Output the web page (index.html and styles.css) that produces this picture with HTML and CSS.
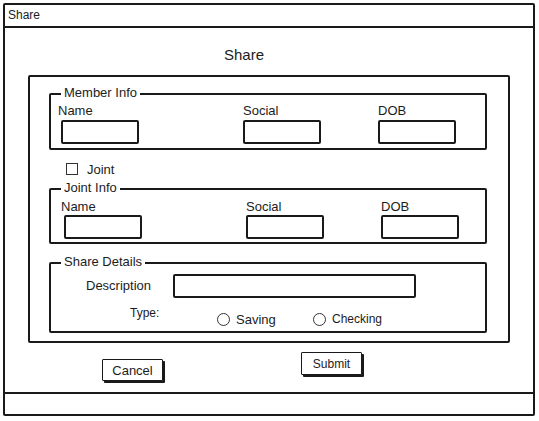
FILE: index.html
```html
<!DOCTYPE html>
<html lang="en">

<head>
    <meta charset="UTF-8">
    <meta name="viewport" content="width=device-width, initial-scale=1.0">
    <title>Share</title>
    <link rel="stylesheet" href="styles.css">
</head>

<body>
    <div class="window">
        <div class="titlebar">Share</div>

        <div class="content">
            <h2 class="heading">Share</h2>

            <div class="panel">

                <!--Member Info-->
                <div class="group member">
                    <span class="legend">Member Info</span>
                    <div class="cols">
                        <div class="field">
                            <p class="label">Name</p>
                            <div class="input shift"></div>
                        </div>
                        <div class="field">
                            <p class="label">Social</p>
                            <div class="input"></div>
                        </div>
                        <div class="field">
                            <p class="label">DOB</p>
                            <div class="input"></div>
                        </div>
                    </div>
                </div>

                <div class="joint-row">
                    <span class="checkbox"></span>
                    <span class="joint-text">Joint</span>
                </div>

                <!--Joint Info-->
                <div class="group joint">
                    <span class="legend">Joint Info</span>
                    <div class="cols">
                        <div class="field">
                            <p class="label">Name</p>
                            <div class="input shift"></div>
                        </div>
                        <div class="field">
                            <p class="label">Social</p>
                            <div class="input"></div>
                        </div>
                        <div class="field">
                            <p class="label">DOB</p>
                            <div class="input"></div>
                        </div>
                    </div>
                </div>

                <!--Share Details-->
                <div class="group details">
                    <span class="legend">Share Details</span>
                    <div class="row">
                        <span class="row-label desc">Description</span>
                        <div class="input wide"></div>
                    </div>
                    <div class="row">
                        <span class="row-label type">Type:</span>
                        <span class="option"><span class="radio"></span>Saving</span>
                        <span class="option arial"><span class="radio"></span>Checking</span>
                    </div>
                </div>
            </div>

            <div class="buttons">
                <button class="btn cancel">Cancel</button>
                <button class="btn submit">Submit</button>
            </div>
        </div>

        <div class="footer"></div>
    </div>
</body>

</html>
```

FILE: styles.css
```css
* {
    box-sizing: border-box;
}

body {
    margin: 0;
    font-family: "Liberation Sans", Arial, sans-serif;
    font-size: 13px;
    color: #1c1c1c;
    background: white;
}

p {
    margin: 0;
}

.window {
    margin: 3px;
    width: 532px;
    height: 413px;
    border: 2px solid #1a1a1a;
    border-radius: 2px;
    display: flex;
    flex-direction: column;
}

.titlebar {
    height: 23px;
    border-bottom: 2px solid #1a1a1a;
    padding-left: 3px;
    font-size: 12px;
    line-height: 20px;
}

.content {
    flex: 1;
}

.heading {
    margin: 0;
    padding-top: 18px;
    padding-right: 50px;
    text-align: center;
    font-size: 15px;
    font-weight: normal;
    line-height: 18px;
}

.panel {
    margin-top: 11px;
    margin-left: 23px;
    width: 482px;
    height: 268px;
    border: 2px solid #1a1a1a;
    border-radius: 2px;
    padding-top: 16px;
}

.group {
    position: relative;
    margin-left: 19px;
    width: 438px;
    border: 2px solid #1a1a1a;
    border-radius: 2px;
}

.legend {
    position: absolute;
    top: -10px;
    left: 10px;
    padding: 0 3px;
    background: white;
    line-height: 16px;
}

.cols {
    display: grid;
    grid-template-columns: 185px 135px auto;
}

.member .cols {
    padding: 8px 0 4px 7px;
}

.joint .cols {
    padding: 9px 0 3px 10px;
}

.label {
    line-height: 15px;
}

.member .input {
    margin-top: 2px;
}

.joint .input {
    margin-top: 1px;
}

.input {
    width: 78px;
    height: 24px;
    border: 2px solid #1a1a1a;
    border-radius: 2px;
}

.input.shift {
    margin-left: 3px;
}

.joint-row {
    display: flex;
    align-items: center;
    margin: 13px 0 13px 36px;
    height: 12px;
}

.checkbox {
    width: 12px;
    height: 12px;
    border: 1px solid #333;
}

.joint-text {
    margin-left: 9px;
    line-height: 15px;
}

.details {
    margin-top: 18px;
    padding: 10px 0 4px 0;
}

.row {
    display: flex;
    align-items: flex-start;
}

.row + .row {
    margin-top: 8px;
}

.row-label {
    width: 87px;
    line-height: 15px;
}

.desc {
    margin-left: 35px;
    margin-top: 4px;
}

.type {
    margin-left: 79px;
    font-size: 12px;
}

.input.wide {
    width: 243px;
}

.option {
    display: flex;
    align-items: center;
    width: 96px;
    margin-top: 6px;
    line-height: 15px;
}

.arial {
    font-size: 12px;
}

.radio {
    width: 13px;
    height: 13px;
    border: 1px solid #333;
    border-radius: 50%;
    margin-right: 6px;
}

.buttons {
    display: flex;
    align-items: flex-start;
}

.btn {
    font-family: inherit;
    font-size: 12px;
    color: #1c1c1c;
    background: white;
    width: 61px;
    height: 22px;
    padding: 0;
    border: 1.5px solid #1a1a1a;
    border-radius: 1px;
    box-shadow: 2px 2px 0 #1a1a1a;
}

.cancel {
    margin-left: 97px;
    margin-top: 16px;
    font-size: 13px;
}

.submit {
    margin-left: 138px;
    margin-top: 9px;
    height: 23px;
}

.footer {
    height: 22px;
    border-top: 2px solid #1a1a1a;
}
```
